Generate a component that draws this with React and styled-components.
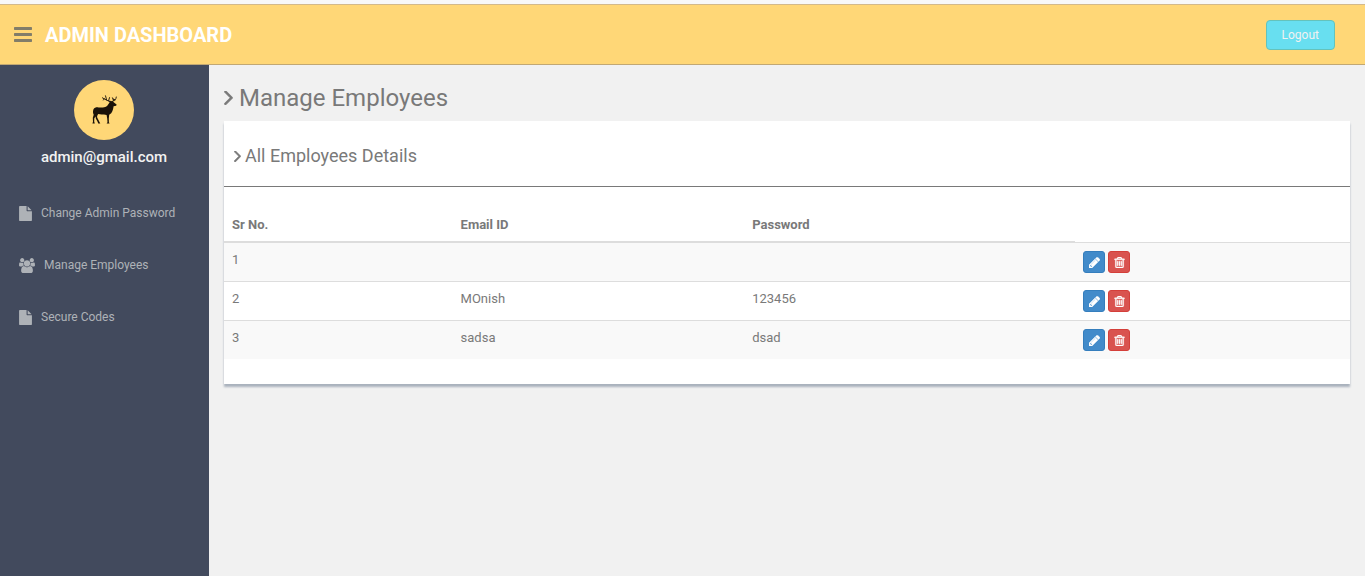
import React from 'react';
import styled, { createGlobalStyle } from 'styled-components';

const GlobalStyle = createGlobalStyle`
  *, *::before, *::after { box-sizing: border-box; }
  body {
    margin: 0;
    background: #f1f1f1;
    color: #797979;
    font-family: Roboto, "Liberation Sans", sans-serif;
    font-size: 13px;
    line-height: 20px;
  }
`;

const icons = {
  bars: {
    box: '128 256 1536 1280',
    d: 'M1664 1344v128q0 26-19 45t-45 19h-1408q-26 0-45-19t-19-45v-128q0-26 19-45t45-19h1408q26 0 45 19t19 45zm0-512v128q0 26-19 45t-45 19h-1408q-26 0-45-19t-19-45v-128q0-26 19-45t45-19h1408q26 0 45 19t19 45zm0-512v128q0 26-19 45t-45 19h-1408q-26 0-45-19t-19-45v-128q0-26 19-45t45-19h1408q26 0 45 19t19 45z',
  },
  angle: {
    box: '589 494 582 965',
    d: 'M1171 960q0 13-10 23l-466 466q-10 10-23 10t-23-10l-50-50q-10-10-10-23t10-23l393-393-393-393q-10-10-10-23t10-23l50-50q10-10 23-10t23 10l466 466q10 10 10 23z',
  },
  file: {
    box: '128 0 1536 1792',
    d: 'M1152 512v-472q22 14 36 28l408 408q14 14 28 36h-472zm-128 32q0 40 28 68t68 28h544v1056q0 40-28 68t-68 28h-1344q-40 0-68-28t-28-68v-1600q0-40 28-68t68-28h800v544z',
  },
  users: {
    box: '64 0 1920 1792',
    d: 'M657 896q-162 5-265 128h-134q-82 0-138-40.5t-56-118.5q0-353 124-353 6 0 43.5 21t97.5 42.5 119 21.5q67 0 133-23-5 37-5 66 0 139 81 256zm1071 637q0 120-73 189.5t-194 69.5h-874q-121 0-194-69.5t-73-189.5q0-53 3.5-103.5t14-109 26.5-108.5 43-97.5 62-81 85.5-53.5 111.5-20q10 0 43 21.5t73 48 107 48 135 21.5 135-21.5 107-48 73-48 43-21.5q61 0 111.5 20t85.5 53.5 62 81 43 97.5 26.5 108.5 14 109 3.5 103.5zm-1024-1277q0 106-75 181t-181 75-181-75-75-181 75-181 181-75 181 75 75 181zm704 384q0 159-112.5 271.5t-271.5 112.5-271.5-112.5-112.5-271.5 112.5-271.5 271.5-112.5 271.5 112.5 112.5 271.5zm576 225q0 78-56 118.5t-138 40.5h-134q-103-123-265-128 81-117 81-256 0-29-5-66 66 23 133 23 59 0 119-21.5t97.5-42.5 43.5-21q124 0 124 353zm-128-609q0 106-75 181t-181 75-181-75-75-181 75-181 181-75 181 75 75 181z',
  },
  pencil: {
    box: '128 128 1536 1536',
    d: 'M491 1536l91-91-235-235-91 91v107h128v128h107zm523-928q0-22-22-22-10 0-17 7l-542 542q-7 7-7 17 0 22 22 22 10 0 17-7l542-542q7-7 7-17zm-54-192l416 416-832 832h-416v-416zm683 96q0 53-37 90l-166 166-416-416 166-165q36-38 90-38 53 0 91 38l235 234q37 39 37 91z',
  },
  trash: {
    box: '128 128 1536 1536',
    d: 'M704 736v576q0 14-9 23t-23 9h-64q-14 0-23-9t-9-23v-576q0-14 9-23t23-9h64q14 0 23 9t9 23zm256 0v576q0 14-9 23t-23 9h-64q-14 0-23-9t-9-23v-576q0-14 9-23t23-9h64q14 0 23 9t9 23zm256 0v576q0 14-9 23t-23 9h-64q-14 0-23-9t-9-23v-576q0-14 9-23t23-9h64q14 0 23 9t9 23zm128 724v-948h-896v948q0 22 7 40.5t14.5 27 10.5 8.5h832q3 0 10.5-8.5t14.5-27 7-40.5zm-672-1076h448l-48-117q-7-9-17-11h-317q-10 2-17 11zm928 32v64q0 14-9 23t-23 9h-96v948q0 83-47 143.5t-113 60.5h-832q-66 0-113-58.5t-47-141.5v-952h-96q-14 0-23-9t-9-23v-64q0-14 9-23t23-9h309l70-167q15-37 54-63t79-26h320q40 0 79 26t54 63l70 167h309q14 0 23 9t9 23z',
  },
};

const Svg = styled.svg`
  display: block;
  flex: none;
  width: ${(p) => p.$w}px;
  height: ${(p) => p.$h}px;
  fill: currentColor;
  stroke: currentColor;
  stroke-width: ${(p) => p.$stroke};
`;

const Icon = ({ name, w, h, stroke = 0 }) => (
  <Svg viewBox={icons[name].box} $w={w} $h={h} $stroke={stroke} aria-hidden="true">
    <path d={icons[name].d} />
  </Svg>
);

const Page = styled.div`
  display: flex;
  flex-direction: column;
  min-height: 100vh;
  padding-top: 4px;
  background: #f8f8f8;
`;

const Header = styled.header`
  display: flex;
  align-items: center;
  height: 61px;
  padding: 0 30px 0 14px;
  background: #ffd777;
  border-top: 1px solid #d3b98b;
  border-bottom: 1px solid #c2a873;
`;

const MenuButton = styled.button`
  display: flex;
  padding: 0;
  border: 0;
  background: none;
  color: #827d69;
`;

const Brand = styled.a`
  margin-left: 13px;
  color: #fff;
  font-size: 20px;
  line-height: 24px;
  font-weight: 700;
  text-decoration: none;
`;

const LogoutButton = styled.button`
  margin-left: auto;
  padding: 4px 15px;
  border: 1px solid #64c3bc;
  border-radius: 4px;
  background: #68dff0;
  color: #f2f2f2;
  font: inherit;
  font-size: 12px;
`;

const Body = styled.div`
  display: flex;
  flex: 1;
  background: #f1f1f1;
`;

const Sidebar = styled.aside`
  flex: none;
  width: 209px;
  padding: 15px 1px 0 0;
  background: #424a5d;
`;

const Profile = styled.div`
  display: flex;
  flex-direction: column;
  align-items: center;
`;

const Avatar = styled.svg`
  width: 60px;
  height: 60px;
`;

const Email = styled.h5`
  margin: 7px 0 0;
  color: #f2f2f2;
  font-size: 15px;
  line-height: 20px;
  font-weight: 500;
`;

const Nav = styled.nav`
  display: flex;
  flex-direction: column;
  gap: 16px;
  margin-top: 28px;
`;

const NavLink = styled.a`
  display: flex;
  align-items: center;
  gap: 9px;
  height: 36px;
  padding: 0 19px;
  color: #aeb2b7;
  font-size: 12px;
  text-decoration: none;
`;

const Main = styled.main`
  flex: 1;
  min-width: 0;
  padding: 18px 15px;
`;

const Title = styled.h3`
  display: flex;
  align-items: center;
  gap: 6px;
  margin: 0 0 8px;
  font-size: 24px;
  line-height: 30px;
  font-weight: 400;
`;

const Card = styled.section`
  padding-bottom: 25px;
  background: #fff;
  box-shadow: 0 3px 2px #aab2bd;
`;

const CardTitle = styled.h4`
  display: flex;
  align-items: center;
  gap: 4px;
  margin: 0;
  padding: 24px 10px 19px;
  border-bottom: 1px solid #797979;
  font-size: 18px;
  line-height: 22px;
  font-weight: 400;
`;

const Table = styled.table`
  width: 100%;
  margin-top: 18px;
  border-collapse: separate;
  border-spacing: 0;
  table-layout: fixed;
`;

const HeadCell = styled.th`
  width: ${(p) => p.$width};
  height: 38px;
  padding: 8px 8px 6px;
  border-bottom: 2px solid #ddd;
  text-align: left;
  vertical-align: bottom;
  font-weight: 700;
`;

const EmptyHeadCell = styled.td`
  padding: 0;
  border-bottom: 1px solid #ddd;
`;

const Row = styled.tr`
  height: 39px;
  &:nth-child(odd) { background: #f9f9f9; }
  &:first-child { height: 38px; }
  &:not(:first-child) td { border-top: 1px solid #ddd; }
`;

const Cell = styled.td`
  padding: 7px 8px;
  vertical-align: top;
`;

const Actions = styled.div`
  display: flex;
  gap: 3px;
  padding-top: 1px;
`;

const ActionButton = styled.button`
  display: flex;
  align-items: center;
  justify-content: center;
  width: 22px;
  height: 22px;
  padding: 0;
  border: 1px solid ${(p) => (p.$danger ? '#d43f3a' : '#357ebd')};
  border-radius: 3px;
  background: ${(p) => (p.$danger ? '#d9534f' : '#428bca')};
  color: #fff;
`;

const links = [
  { icon: 'file', width: 13, label: 'Change Admin Password' },
  { icon: 'users', width: 16, label: 'Manage Employees' },
  { icon: 'file', width: 13, label: 'Secure Codes' },
];

const employees = [
  { id: 1, email: '', password: '' },
  { id: 2, email: 'MOnish', password: '123456' },
  { id: 3, email: 'sadsa', password: 'dsad' },
];

const DeerAvatar = () => (
  <Avatar viewBox="0 0 60 60" role="img" aria-label="Deer">
    <circle cx="30" cy="30" r="30" fill="#ffd777" />
    <path
      fill="#1b1209"
      d="M19.5 29.2C20.5 27.4 22.5 27.2 24.5 27.4C27.5 27.6 30 27.8 32.3 26.6C33.8 25.6 34.6 23.6 35.6 22.2L34.3 21L36.8 21.2L38.6 21L40 22.5L42.6 24.4L42.2 25.8L39.6 26.3C39.2 28.6 38.9 31.2 37.2 33.2L35.2 34.7L34.8 38.5L34.9 42.2L35.6 43.6H32.6L33.5 42.2L33.2 38.6L32.6 35L30 34.4C27.8 34.6 26 34.6 24.3 34.1C23.5 35.2 22.8 36.2 23.2 37.5L25.2 41.6L26.3 43.6H24.2L23.6 41.8L21.8 38.4L21.6 36.4L20.3 38.2L20.2 41.6L20.8 43.6H18.4L19 41.8L18.8 37.8L19.7 34.8C18.9 33 18.7 31 19.5 29.2Z"
    />
    <g fill="none" stroke="#1b1209" strokeWidth="0.9" strokeLinecap="round">
      <path d="M37 21.5C34 21.3 32 19.8 28.4 17.8M32.6 19.9L31.5 15.8M34.6 20.7L35.5 17.6M30.3 18.7L29.4 20" />
      <path d="M38.6 21.2C41 20.5 42 19.5 42.3 17M39.8 20.7L38.5 17.8M41.2 19.8L38.9 19" />
    </g>
  </Avatar>
);

export default function App() {
  return (
    <>
      <GlobalStyle />
      <Page>
        <Header>
          <MenuButton type="button" aria-label="Toggle navigation">
            <Icon name="bars" w={18} h={15} />
          </MenuButton>
          <Brand href="#">ADMIN DASHBOARD</Brand>
          <LogoutButton type="button">Logout</LogoutButton>
        </Header>
        <Body>
          <Sidebar>
            <Profile>
              <DeerAvatar />
              <Email>admin@gmail.com</Email>
            </Profile>
            <Nav>
              {links.map((link) => (
                <NavLink href="#" key={link.label}>
                  <Icon name={link.icon} w={link.width} h={15} />
                  {link.label}
                </NavLink>
              ))}
            </Nav>
          </Sidebar>
          <Main>
            <Title>
              <Icon name="angle" w={9} h={14} stroke={50} />
              Manage Employees
            </Title>
            <Card>
              <CardTitle>
                <Icon name="angle" w={7} h={11} stroke={50} />
                All Employees Details
              </CardTitle>
              <Table>
                <thead>
                  <tr>
                    <HeadCell scope="col" $width="20.3%">Sr No.</HeadCell>
                    <HeadCell scope="col" $width="25.9%">Email ID</HeadCell>
                    <HeadCell scope="col" $width="29.4%">Password</HeadCell>
                    <EmptyHeadCell />
                  </tr>
                </thead>
                <tbody>
                  {employees.map((employee) => (
                    <Row key={employee.id}>
                      <Cell>{employee.id}</Cell>
                      <Cell>{employee.email}</Cell>
                      <Cell>{employee.password}</Cell>
                      <Cell>
                        <Actions>
                          <ActionButton type="button" aria-label="Edit employee">
                            <Icon name="pencil" w={11} h={11} stroke={60} />
                          </ActionButton>
                          <ActionButton type="button" $danger aria-label="Delete employee">
                            <Icon name="trash" w={11} h={11} stroke={60} />
                          </ActionButton>
                        </Actions>
                      </Cell>
                    </Row>
                  ))}
                </tbody>
              </Table>
            </Card>
          </Main>
        </Body>
      </Page>
    </>
  );
}
